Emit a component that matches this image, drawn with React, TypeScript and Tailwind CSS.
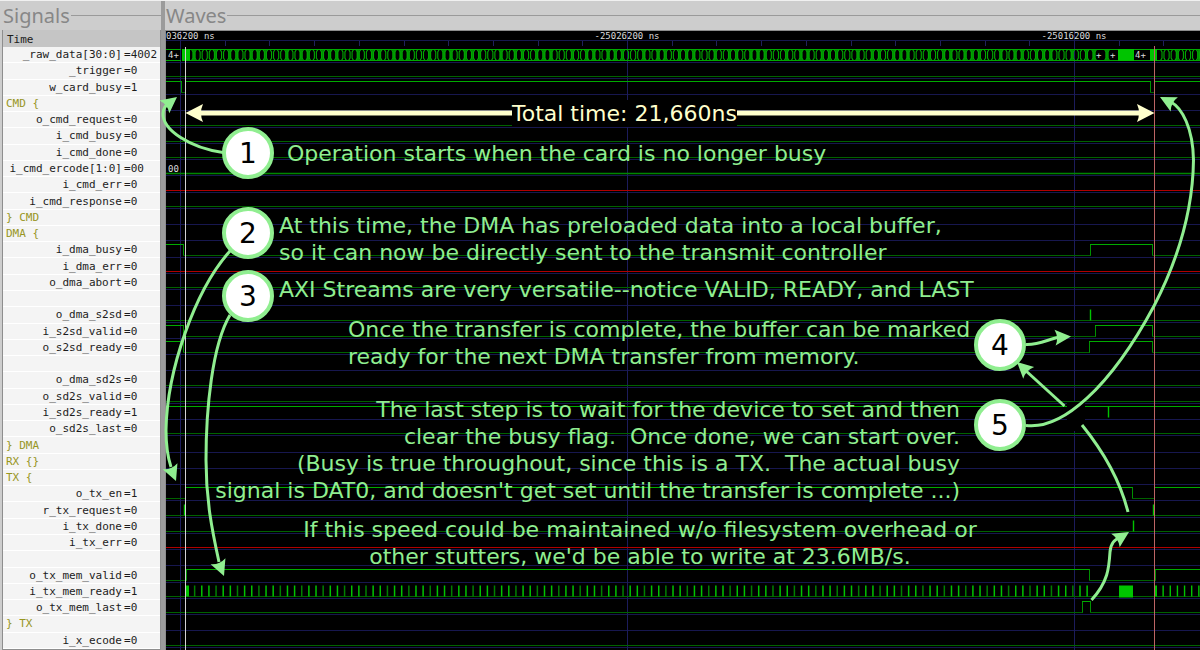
import type { ReactNode } from "react";

type Level = "low" | "high";

type Signal = {
  name?: string;
  value?: string;
  group?: string;
  trace?: "bus" | "flat" | "vector" | "undef" | "ticks";
  // level changes as [x, level], the first entry is the initial state
  edges?: [number, Level][];
  pulses?: number[];
};

const SIGNALS: Signal[] = [
  { name: "_raw_data[30:0]", value: "4002", trace: "bus" },
  { name: "_trigger", value: "0", trace: "flat" },
  {
    name: "w_card_busy",
    value: "1",
    edges: [
      [0, "high"],
      [181, "low"],
      [185, "high"],
      [1150, "low"],
      [1154, "high"],
    ],
  },
  { group: "CMD {" },
  { name: "o_cmd_request", value: "0", trace: "flat" },
  { name: "i_cmd_busy", value: "0", trace: "flat" },
  { name: "i_cmd_done", value: "0", trace: "flat" },
  { name: "i_cmd_ercode[1:0]", value: "00", trace: "vector" },
  { name: "i_cmd_err", value: "0", trace: "undef" },
  { name: "i_cmd_response", value: "0", trace: "flat" },
  { group: "} CMD" },
  { group: "DMA {" },
  {
    name: "i_dma_busy",
    value: "0",
    edges: [
      [0, "high"],
      [183, "low"],
      [1090, "high"],
      [1152, "low"],
    ],
  },
  { name: "i_dma_err", value: "0", trace: "undef" },
  { name: "o_dma_abort", value: "0", trace: "flat" },
  {},
  { name: "o_dma_s2sd", value: "0", trace: "flat", pulses: [1090] },
  {
    name: "i_s2sd_valid",
    value: "0",
    edges: [
      [0, "high"],
      [183, "low"],
      [1095, "high"],
      [1152, "low"],
    ],
  },
  {
    name: "o_s2sd_ready",
    value: "0",
    edges: [
      [0, "high"],
      [183, "low"],
      [1089, "high"],
      [1152, "low"],
    ],
  },
  {},
  { name: "o_dma_sd2s", value: "0", trace: "flat" },
  { name: "o_sd2s_valid", value: "0", trace: "flat" },
  {
    name: "i_sd2s_ready",
    value: "1",
    edges: [[0, "high"]],
    pulses: [1108],
  },
  { name: "o_sd2s_last", value: "0", trace: "flat" },
  { group: "} DMA" },
  { group: "RX {}" },
  { group: "TX {" },
  {
    name: "o_tx_en",
    value: "1",
    edges: [
      [0, "low"],
      [185, "high"],
      [1132, "low"],
      [1154, "high"],
    ],
  },
  { name: "r_tx_request", value: "0", trace: "flat", pulses: [184, 1153] },
  { name: "i_tx_done", value: "0", trace: "flat", pulses: [1133] },
  { name: "i_tx_err", value: "0", trace: "undef" },
  {},
  {
    name: "o_tx_mem_valid",
    value: "0",
    edges: [
      [0, "low"],
      [186, "high"],
      [1089, "low"],
      [1155, "high"],
    ],
  },
  { name: "i_tx_mem_ready", value: "1", trace: "ticks" },
  {
    name: "o_tx_mem_last",
    value: "0",
    edges: [
      [0, "low"],
      [1082, "high"],
      [1090, "low"],
    ],
  },
  { group: "} TX" },
  { name: "i_x_ecode", value: "0", trace: "flat" },
];

const ROW = 16.25;
const END = 4000;
const PERIOD = 7.14;

const DIM = "#006200";
const GREEN = "#00aa00";
const BRIGHT = "#00c400";
const NAVY = "#17174f";

export default function App() {
  return (
    <div className="relative flex min-h-screen overflow-hidden border-t border-[#f0f0f0] bg-[#cdcdcd]">
      <SignalPanel />
      <div className="w-1 shrink-0 bg-[#9b9b9b]" />
      <main className="flex min-w-0 flex-1 flex-col">
        <PanelTitle>Waves</PanelTitle>
        <div className="relative flex-1 border-l border-t border-[#8c8c8c] bg-black">
          <Waves />
        </div>
      </main>
      <Annotations />
    </div>
  );
}

function PanelTitle({ children }: { children: ReactNode }) {
  return (
    <div className="flex h-[29px] items-center gap-px pl-px">
      <h2 className="font-['Noto_Sans',sans-serif] text-xl leading-7 text-[#878787]">
        {children}
      </h2>
      <span className="h-px flex-1 bg-[#9a9a9a]" />
    </div>
  );
}

function SignalPanel() {
  return (
    <aside className="flex w-[161px] shrink-0 flex-col pl-[2px]">
      <PanelTitle>Signals</PanelTitle>
      <div className="flex flex-1 flex-col border-x border-b border-[#8e8e8e] font-['DejaVu_Sans_Mono',monospace] text-[11px] leading-[15px] text-[#1c1c1c]">
        <div className="h-[17px] bg-[#c5c5c5] pl-1 pt-[2px]">Time</div>
        <ul className="flex flex-1 flex-col">
          {SIGNALS.map((s, i) => (
            <li
              key={i}
              className="flex flex-1 items-center border-b border-white bg-[#f4f4f4] whitespace-nowrap"
            >
              {s.group && <span className="pl-[3px] text-[#98961f]">{s.group}</span>}
              {s.name && (
                <>
                  <span className="w-[119px] shrink-0 text-right">{s.name}</span>
                  <span className="pl-[2px]">={s.value}</span>
                </>
              )}
            </li>
          ))}
        </ul>
      </div>
    </aside>
  );
}

//
// waveforms
//

function Waves() {
  const grid = [181, 628, 1075, 1522, 1969];
  const ticks = Array.from({ length: 60 }, (_, i) => Math.round(181 + i * 44.7));
  return (
    <svg className="absolute inset-0 h-full w-full font-['DejaVu_Sans_Mono',monospace] text-[9px]">
      <g transform="translate(-166 -31)" fill="none">
        {/* time axis */}
        <path d={`M166 40.5H${END}`} stroke={NAVY} />
        {ticks.map((x) => (
          <path key={x} d={`M${x - 0.5} 41V46`} stroke="#20205c" />
        ))}
        {SIGNALS.map((_, i) => (
          <path key={i} d={`M166 ${lowY(i) + 2}H${END}`} stroke={NAVY} />
        ))}
        {grid.map((x) => (
          <path key={x} d={`M${x - 0.5} 31V${END}`} stroke="#1c1c5c" />
        ))}
        <g fill="#dcdcdc">
          <text x="166" y="39">036200 ns</text>
          <text x="627" y="39" textAnchor="middle">-25026200 ns</text>
          <text x="1074" y="39" textAnchor="middle">-25016200 ns</text>
        </g>
        {SIGNALS.map((s, i) => (
          <Trace key={i} signal={s} row={i} />
        ))}
        <rect x="1067" y="402" width="18" height="29" fill="black" />
        <path d={`M185.5 47V${END}`} stroke="#d2d2d2" />
        <path d={`M1154.5 46V${END}`} stroke="#bd6464" />
      </g>
    </svg>
  );
}

function lowY(row: number) {
  return Math.floor(60 + row * ROW) + 0.5;
}

function Trace({ signal, row }: { signal: Signal; row: number }) {
  const low = lowY(row);
  const high = low - 11;
  return (
    <>
      {signal.trace === "bus" && <Bus />}
      {signal.trace === "flat" && <path d={`M166 ${low}H${END}`} stroke={DIM} />}
      {signal.trace === "undef" && <path d={`M166 ${low}H${END}`} stroke="#b00000" />}
      {signal.trace === "vector" && (
        <>
          <path d={`M166 ${low}H${END}`} stroke="#008600" strokeWidth="1.6" />
          <text x="168" y="172" fill="#dcdcdc">00</text>
        </>
      )}
      {signal.trace === "ticks" && (
        <>
          <path d={`M166 ${low}H${END}`} stroke={DIM} />
          {steps(187.5, 1090).map((x, i) => (
            <path
              key={x}
              d={`M${x} ${high}V${low}`}
              stroke={i % 3 === 1 ? "#008000" : BRIGHT}
              strokeWidth={i === 0 ? 3 : 1.5}
            />
          ))}
          {steps(1156, 2400).map((x, i) => (
            <path key={x} d={`M${x} ${high}V${low}`} stroke={BRIGHT} strokeWidth={i === 0 ? 2 : 1.4} />
          ))}
          <rect x="1119" y={high} width="14" height="12" fill={BRIGHT} />
        </>
      )}
      {signal.edges?.map(([x, level], i, all) => {
        const y = level === "low" ? low : high;
        const end = all[i + 1]?.[0] ?? END;
        return (
          <g key={x}>
            {i > 0 && <path d={`M${x + 0.5} ${low}V${high}`} stroke="#009000" />}
            <path d={`M${x} ${y}H${end + 1}`} stroke={level === "low" ? DIM : GREEN} />
          </g>
        );
      })}
      {signal.pulses?.map((x) => (
        <path key={x} d={`M${x + 0.5} ${high}V${low}`} stroke={BRIGHT} strokeWidth="1.4" />
      ))}
    </>
  );
}

function Bus() {
  return (
    <g stroke={GREEN}>
      <path d={`M166 49.5H181M166 60.5H181M185 49.5H${END}M185 60.5H${END}`} />
      <rect x="182" y="49" width="8" height="12" fill={BRIGHT} stroke="none" />
      {steps(194, 1090).map((x, i) => (
        <Cross key={x} x={x} wide={[0, 3, 5, 6, 8, 9].includes(i % 10)} />
      ))}
      <Cross x={1094} wide />
      <Cross x={1107} wide />
      <rect x="1118" y="49" width="16" height="12" fill={BRIGHT} stroke="none" />
      <rect x="1150" y="49" width="7" height="12" fill={BRIGHT} stroke="none" />
      {steps(1163, 2400).map((x, i) => (
        <Cross key={x} x={x} wide={i % 3 === 2} />
      ))}
      <g fill="#dcdcdc" stroke="none">
        <text x="168" y="58">4+</text>
        <text x="1096" y="58">+</text>
        <text x="1110" y="58">+</text>
        <text x="1135" y="58">4+</text>
      </g>
    </g>
  );
}

// change of value on the bus; two changes in a row blend into one wide mark
function Cross({ x, wide }: { x: number; wide: boolean }) {
  return (
    <>
      {wide && <path d={`M${x} 50V60`} stroke="#008a00" strokeWidth="2.6" />}
      <path
        d={`M${x - 2.5} 49.5L${x - 1} 52V58L${x - 2.5} 60.5M${x + 2.5} 49.5L${x + 1} 52V58L${x + 2.5} 60.5`}
        strokeWidth="1.1"
      />
    </>
  );
}

function steps(from: number, to: number) {
  return Array.from({ length: Math.floor((to - from) / PERIOD) + 1 }, (_, i) => from + i * PERIOD);
}

//
// annotations
//

const ARROWS: { path: string; head?: [number, number, number] }[] = [
  { path: "M223 152.5C190 148 163 130 163 114C163 109 165 106 168 104", head: [177, 97, -38] },
  { path: "M230 251C195 290 167 370 166 430C166 448 168 458 171 467", head: [176, 481, 68] },
  { path: "M230 315C212 345 206 410 206 460C206 500 212 530 219 562", head: [224, 576, 68] },
  { path: "M1026 344.5C1040 345 1048 339 1060 337", head: [1071, 336.5, -4] },
  { path: "M1064.5 406L1025 370", head: [1017, 362, -137] },
  {
    path: "M1026 425.5C1062 430 1110 388 1154 306C1184 248 1193 200 1193.5 160C1193 128 1182 108 1171 102",
    head: [1160, 97, -153],
  },
  { path: "M1082 425C1103 451 1120 480 1128 512" },
  { path: "M1091.5 600C1108 582 1109 568 1110 552C1111 542 1115 540 1121 536", head: [1129, 532, -32] },
];

function Annotations() {
  return (
    <div className="pointer-events-none absolute inset-x-0 -top-px bottom-0 font-['DejaVu_Sans',sans-serif] text-[22px] leading-[27px] whitespace-pre text-[#90ee90]">
      <svg className="absolute inset-0 h-full w-full" fill="none">
        <path d="M198 113H1142" stroke="#ffffcc" strokeWidth="5" />
        <path d="M185.5 113L203 104Q199 113 203 122Z" fill="#ffffcc" />
        <path d="M1154.5 113L1137 104Q1141 113 1137 122Z" fill="#ffffcc" />
        {ARROWS.map(({ path, head }) => (
          <g key={path}>
            <path d={path} stroke="#90ee90" strokeWidth="3" />
            {head && (
              <path
                d="M0 0L-16 -8Q-12 0 -16 8Z"
                fill="#90ee90"
                transform={`translate(${head[0]} ${head[1]}) rotate(${head[2]})`}
              />
            )}
          </g>
        ))}
      </svg>

      <p className="absolute left-[512px] top-[100px] bg-black text-[#ffffcc]">
        Total time: 21,660ns
      </p>
      <p className="absolute left-[287px] top-[140px]">
        Operation starts when the card is no longer busy
      </p>
      <p className="absolute left-[279px] top-[212px]">
        {"At this time, the DMA has preloaded data into a local buffer,\n"}
        {"so it can now be directly sent to the transmit controller"}
      </p>
      <p className="absolute left-[279px] top-[276px]">
        AXI Streams are very versatile--notice VALID, READY, and LAST
      </p>
      <p className="absolute left-[348px] top-[316px]">
        {"Once the transfer is complete, the buffer can be marked\n"}
        {"ready for the next DMA transfer from memory."}
      </p>
      <p className="absolute right-[240px] left-[200px] top-[396px] text-right">
        {"The last step is to wait for the device to set and then\n"}
        {"clear the busy flag.  Once done, we can start over.\n"}
        {"(Busy is true throughout, since this is a TX.  The actual busy\n"}
        {"signal is DAT0, and doesn't get set until the transfer is complete ...)"}
      </p>
      <p className="absolute left-[300px] top-[516px] w-[680px] text-center">
        {"If this speed could be maintained w/o filesystem overhead or\n"}
        {"other stutters, we'd be able to write at 23.6MB/s."}
      </p>

      <Badge className="left-[222px] top-[127px]">1</Badge>
      <Badge className="left-[222px] top-[207px]">2</Badge>
      <Badge className="left-[222px] top-[270px]">3</Badge>
      <Badge className="left-[974px] top-[319px]">4</Badge>
      <Badge className="left-[974px] top-[399px]">5</Badge>
    </div>
  );
}

function Badge({ className, children }: { className: string; children: ReactNode }) {
  return (
    <span
      className={`absolute flex size-[52px] items-center justify-center rounded-full border-4 border-[#90ee90] bg-white text-[28px] text-black ${className}`}
    >
      {children}
    </span>
  );
}
